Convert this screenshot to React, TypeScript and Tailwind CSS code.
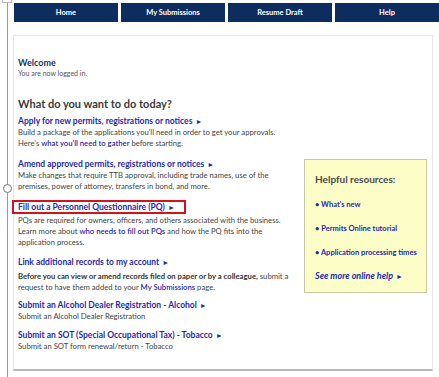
import React from "react";

const navItems = ["Home", "My Submissions", "Resume Draft", "Help"];

const Arrow = () => <span className="inline-block ml-[3px] text-[7px] leading-none">►</span>;

const App: React.FC = () => {
  return (
    <div
      className="w-[439px] h-[377px] overflow-hidden bg-white flex"
      style={{ fontFamily: "Lato, 'Open Sans', Arial, sans-serif" }}
    >
      {/* left rail */}
      <div className="relative w-[13px] shrink-0">
        <div className="absolute left-[2px] top-[-5px] w-[10px] h-[8px] border border-[#b5b5b5] bg-white" />
        <div className="absolute left-[7px] top-[3px] bottom-0 w-px bg-[#9a9a9a]" />
        <div className="absolute left-[3px] top-[184px] w-[9px] h-[9px] rounded-full border border-[#777] bg-white" />
      </div>

      <div className="flex-1 flex flex-col">
        {/* nav */}
        <div className="mt-[3px] ml-px grid grid-cols-4 gap-[3px] h-[19px]">
          {navItems.map((n) => (
            <div
              key={n}
              className="bg-[#0c2d5e] text-white text-[7.5px] font-bold flex items-center justify-center"
            >
              {n}
            </div>
          ))}
        </div>

        {/* main card */}
        <div className="mt-[13px] mr-[6px] h-[336px] border border-[#e6e6e6] border-b-2 border-b-[#b8b8b8] flex pl-[4px] pr-[5px]">
          <div className="w-[284px] shrink-0 pt-[21px] text-[7.7px] leading-[11px] text-[#444]">
            <div className="text-[9px] leading-[11px] font-bold text-[#1b3466]">Welcome</div>
            <div className="text-[7px] leading-[11px] text-[#555]">You are now logged in.</div>

            <div className="mt-[17px] text-[11px] leading-[16px] font-bold text-[#3a3a3a]">
              What do you want to do today?
            </div>

            <div className="mt-[3px]">
              <div className="text-[8.5px] leading-[12px] font-bold text-[#1f2aa8]">
                Apply for new permits, registrations or notices
                <Arrow />
              </div>
              <div>Build a package of the applications you'll need in order to get your approvals.</div>
              <div>
                Here's <span className="font-semibold text-[#1f2aa8]">what you'll need to gather</span> before
                starting.
              </div>
            </div>

            <div className="mt-[9px]">
              <div className="text-[8.5px] leading-[12px] font-bold text-[#1f2aa8]">
                Amend approved permits, registrations or notices
                <Arrow />
              </div>
              <div>Make changes that require TTB approval, including trade names, use of the</div>
              <div>premises, power of attorney, transfers in bond, and more.</div>
            </div>

            <div className="mt-[8px]">
              <div className="-ml-[6px] w-[174px] pl-[4px] border-2 border-[#d3121c] text-[8.5px] leading-[10px] font-bold text-[#1f2aa8]">
                Fill out a Personnel Questionnaire (PQ)
                <Arrow />
              </div>
              <div className="mt-px">PQs are required for owners, officers, and others associated with the business.</div>
              <div>
                Learn more about <span className="font-semibold text-[#1f2aa8]">who needs to fill out PQs</span> and
                how the PQ fits into the
              </div>
              <div>application process.</div>
            </div>

            <div className="mt-[8px]">
              <div className="text-[8.5px] leading-[12px] font-bold text-[#1f2aa8]">
                Link additional records to my account
                <Arrow />
              </div>
              <div className="mt-[3px]">
                <span className="font-bold text-[#333]">
                  Before you can view or amend records filed on paper or by a colleague,
                </span>{" "}
                submit a
              </div>
              <div>
                request to have them added to your{" "}
                <span className="font-semibold text-[#1f2aa8]">My Submissions</span> page.
              </div>
            </div>

            <div className="mt-[6px]">
              <div className="text-[8.5px] leading-[12px] font-bold text-[#1f2aa8]">
                Submit an Alcohol Dealer Registration - Alcohol
                <Arrow />
              </div>
              <div>Submit an Alcohol Dealer Registration</div>
            </div>

            <div className="mt-[7px]">
              <div className="text-[8.5px] leading-[12px] font-bold text-[#1f2aa8]">
                Submit an SOT (Special Occupational Tax) - Tobacco
                <Arrow />
              </div>
              <div>Submit an SOT form renewal/return - Tobacco</div>
            </div>
          </div>

          {/* helpful resources */}
          <div className="flex-1 pt-[123px] pl-[2px]">
            <div className="h-[134px] bg-[#fdfdc8] border border-[#c9c9a6] pl-[10px] pt-[12px]">
              <div className="text-[10px] leading-[14px] font-bold text-[#4a4a4a]">Helpful resources:</div>
              <div className="mt-[14px] flex flex-col gap-[14px] text-[7.5px] leading-[10px] font-bold text-[#1f2aa8]">
                <div>• What's new</div>
                <div>• Permits Online tutorial</div>
                <div>• Application processing times</div>
              </div>
              <div className="mt-[12px] text-[9px] leading-[12px] font-bold italic text-[#1f2aa8]">
                See more online help
                <Arrow />
              </div>
            </div>
          </div>
        </div>
      </div>
    </div>
  );
};

export default App;
